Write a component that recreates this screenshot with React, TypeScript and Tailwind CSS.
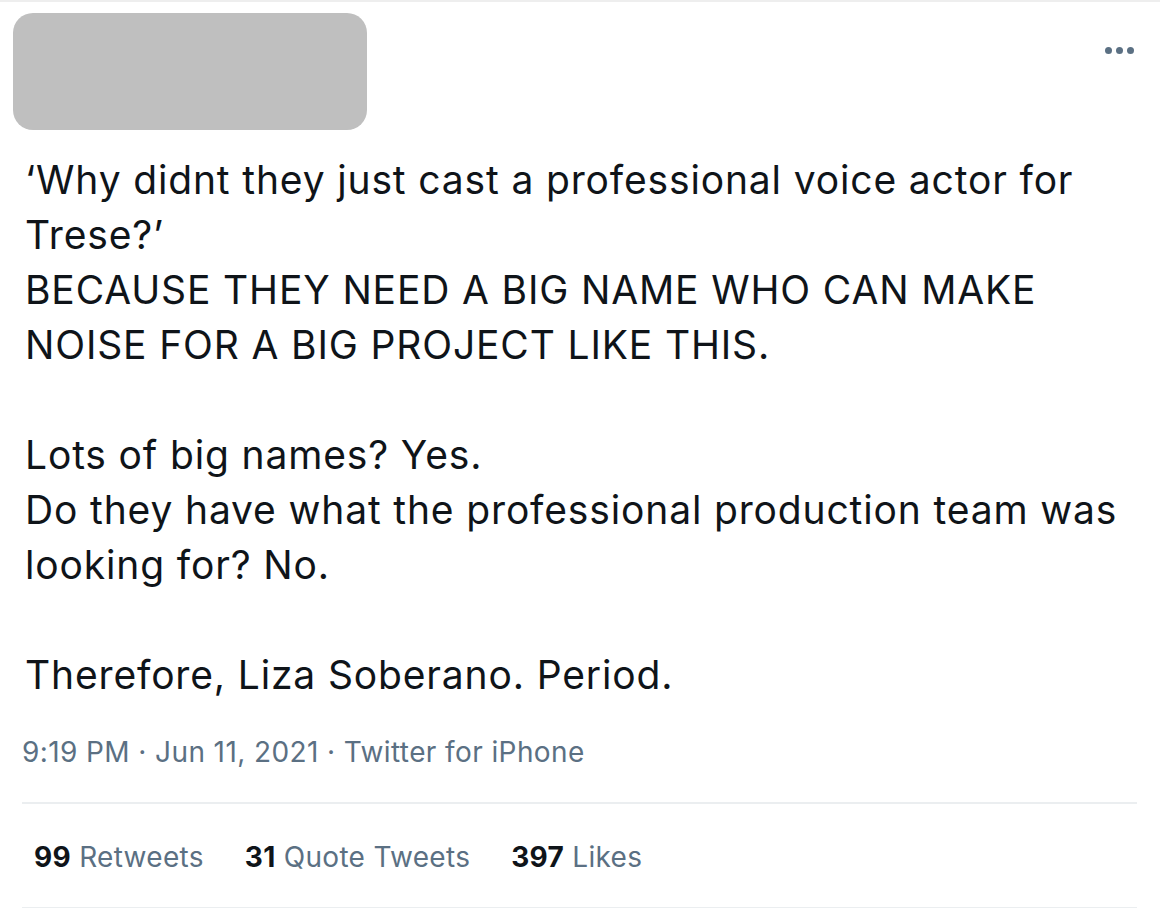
const font = { fontFamily: 'Inter, "Liberation Sans", Arial, sans-serif' }

function Stat({ count, label }: { count: string; label: string }) {
  return (
    <span className="whitespace-nowrap">
      <span className="font-bold text-[#0f1419]">{count}</span>{' '}
      <span className="text-[#5b7083]">{label}</span>
    </span>
  )
}

export default function App() {
  return (
    <div
      className="h-[908px] w-[1160px] overflow-hidden border-t-2 border-[#eeeeee] bg-white"
      style={font}
    >
      <div className="flex items-start justify-between pl-[13px] pr-[26px] pt-[11px]">
        <div className="h-[117px] w-[354px] rounded-[20px] bg-[#bfbfbf]" />
        <div className="mt-[34px] flex gap-[4px]">
          <span className="h-[7px] w-[7px] rounded-full bg-[#5b7083]" />
          <span className="h-[7px] w-[7px] rounded-full bg-[#5b7083]" />
          <span className="h-[7px] w-[7px] rounded-full bg-[#5b7083]" />
        </div>
      </div>

      <div className="mt-[22px] pl-[25px] pr-[10px] text-[39px] leading-[55px] tracking-[0.85px] text-[#0f1419]">
        <p>‘Why didnt they just cast a professional voice actor for</p>
        <p>Trese?’</p>
        <p>BECAUSE THEY NEED A BIG NAME WHO CAN MAKE</p>
        <p>NOISE FOR A BIG PROJECT LIKE THIS.</p>
        <p className="h-[55px]" />
        <p>Lots of big names? Yes.</p>
        <p>Do they have what the professional production team was</p>
        <p>looking for? No.</p>
        <p className="h-[55px]" />
        <p>Therefore, Liza Soberano. Period.</p>
      </div>

      <div className="mx-[22px] mr-[23px]">
        <div className="pt-[33px] pb-[33px] text-[28px] leading-[34px] tracking-[0.4px] text-[#5b7083]">
          9:19 PM · Jun 11, 2021 · Twitter for iPhone
        </div>
        <div className="h-[2px] bg-[#ebeef0]" />
        <div className="flex gap-[41px] pt-[36px] pb-[33px] pl-[12px] text-[28px] leading-[34px] tracking-[0.3px]">
          <Stat count="99" label="Retweets" />
          <Stat count="31" label="Quote Tweets" />
          <Stat count="397" label="Likes" />
        </div>
        <div className="h-[2px] bg-[#ebeef0]" />
      </div>
    </div>
  )
}
